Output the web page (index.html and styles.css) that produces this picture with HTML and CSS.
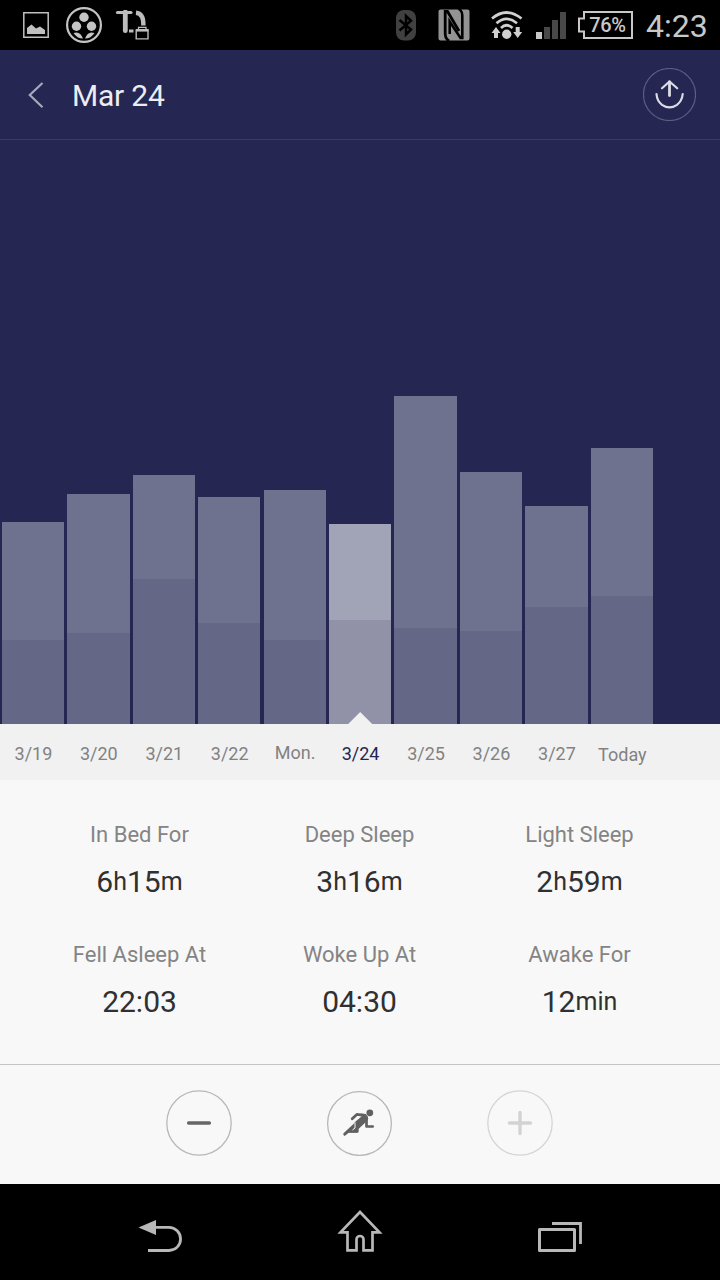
FILE: index.html
```html
<!DOCTYPE html>
<html lang="en">
<head>
<meta charset="utf-8">
<title>Sleep history</title>
<link rel="stylesheet" href="styles.css">
</head>
<body>
<div class="screen">
  <div class="status">
    <svg class="st-image" viewBox="23 12 26 26" width="26" height="26"><path d="M23.800 12.800H48.200V37.200H23.800Z" fill="none" stroke="#c0c0c0" stroke-width="1.500"/><path d="M27 34V28L31.500 24.500L36 28.500L40 26.500L45 30V34Z" fill="#c0c0c0"/></svg>
    <svg class="st-reel" viewBox="66 7 36 36" width="36" height="36"><circle cx="84" cy="25" r="16.900" fill="none" stroke="#c4c4c4" stroke-width="2.200"/><g fill="#c4c4c4"><circle cx="84" cy="17.300" r="4.700"/><circle cx="76.500" cy="26.300" r="4.700"/><circle cx="91.500" cy="26.300" r="4.700"/><path d="M73.500 33Q80 30.500 83 38.500Q77 38.500 73.500 33ZM94.500 33Q88 30.500 85 38.500Q91 38.500 94.500 33Z"/></g></svg>
    <svg class="st-lock" viewBox="115 10 35 31" width="35" height="31"><g fill="none" stroke="#bdbdbd"><path d="M117.500 12.500H131" stroke-width="3.200" stroke-linecap="round"/><path d="M125.300 12V30.700" stroke-width="4.800" stroke-linecap="round"/><path d="M136 12.800C141 13.200 143.600 17 143.400 25.500" stroke-width="4.400"/><path d="M129 31H133.500" stroke-width="3"/><path d="M136.200 30V38.900H148V30Z" stroke-width="1.400"/><path d="M136 30.300H148.500" stroke-width="2.600"/><path d="M138.500 30V27.300H146V30" stroke-width="1.300"/></g></svg>
    <svg class="st-bt" viewBox="396 10 20 31" width="20" height="31"><rect x="396" y="10" width="20" height="30.500" rx="8" fill="#404040"/><path d="M399.500 20L411 29.500L406 34.500V16L411 20.800L399.500 30.500" fill="none" stroke="#000" stroke-width="2.500"/></svg>
    <svg class="st-nfc" viewBox="438 9 32 32" width="32" height="32"><rect x="438.500" y="9.500" width="31" height="31" rx="2" fill="#939393"/><path d="M449 41Q445.200 38.500 445.200 34V11.500H447.500L459 31" fill="none" stroke="#000" stroke-width="2.800"/><path d="M458.500 8.500Q462.300 11 462.300 15.500V38H460.500L449.700 21.500V34" fill="none" stroke="#000" stroke-width="2.600"/></svg>
    <svg class="st-wifi" viewBox="490 10 33 30" width="33" height="30"><g fill="none" stroke="#d0d0d0" stroke-width="2.700"><path d="M492 18.500Q506.500 6.500 521.500 18.500M496.500 23.200Q506.500 14.500 517 23.200M501 28Q506.500 22.500 512.500 28"/></g><g fill="#d0d0d0"><circle cx="506.700" cy="34.200" r="4.700"/><path d="M496 27L500.500 33H498V38H494V33H491.500ZM517.700 38L522.200 32H519.700V27H515.700V32H513.200Z"/></g></svg>
    <svg class="st-signal" viewBox="536 12 30 27" width="30" height="27"><path d="M536 32H542V39H536Z" fill="#c8c8c8"/><path d="M544 27H550V39H544ZM552 20H558V39H552ZM560 12H566V39H560Z" fill="#484848"/></svg>
    <div class="battery">
      <svg viewBox="578 11 55 28" width="55" height="28"><path d="M584 12H632V38H584V31.500H579V18.500H584Z" fill="none" stroke="#c8c8c8" stroke-width="2"/></svg>
      <span class="battery-text">76%</span>
    </div>
    <span class="clock">4:23</span>
  </div>

  <div class="header">
    <svg class="back" viewBox="28 81 16 28" width="16" height="28"><path d="M42.500 83L29.800 95L42.500 107.200" fill="none" stroke="#a7a8ba" stroke-width="2.200"/></svg>
    <div class="title">Mar 24</div>
    <svg class="share" viewBox="643 68 53 53" width="53" height="53"><circle cx="669.500" cy="94.500" r="26" fill="none" stroke="#5c5d80" stroke-width="1.200"/><g fill="none" stroke="#dcdce4" stroke-width="2.200" stroke-linecap="round" stroke-linejoin="round"><path d="M656.500 94Q657 101 662 104.800Q669.500 110 677 104.800Q682 101 682.700 94M662 88.300L669.500 81.500L677.200 88.300"/><path d="M669.500 82V95.500" stroke-width="2.800"/></g></svg>
  </div>

  <div class="chart">
    <div class="bar" style="height:202px"><div class="deep" style="height:84px"></div></div>
    <div class="bar" style="height:230px"><div class="deep" style="height:91px"></div></div>
    <div class="bar" style="height:249px"><div class="deep" style="height:145px"></div></div>
    <div class="bar" style="height:227px"><div class="deep" style="height:101px"></div></div>
    <div class="bar" style="height:234px"><div class="deep" style="height:84px"></div></div>
    <div class="bar selected" style="height:200px"><div class="deep" style="height:104px"></div></div>
    <div class="bar" style="height:328px"><div class="deep" style="height:96px"></div></div>
    <div class="bar" style="height:252px"><div class="deep" style="height:93px"></div></div>
    <div class="bar" style="height:218px"><div class="deep" style="height:117px"></div></div>
    <div class="bar" style="height:276px"><div class="deep" style="height:128px"></div></div>
  </div>

  <div class="days">
    <span class="day">3/19</span><span class="day">3/20</span><span class="day">3/21</span><span class="day">3/22</span><span class="day high">Mon.</span><span class="day current">3/24</span><span class="day">3/25</span><span class="day">3/26</span><span class="day">3/27</span><span class="day low">Today</span>
  </div>

  <div class="stats">
    <div class="stat"><div class="label">In Bed For</div><div class="value">6<span class="unit">h</span>15<span class="unit">m</span></div></div>
    <div class="stat"><div class="label">Deep Sleep</div><div class="value">3<span class="unit">h</span>16<span class="unit">m</span></div></div>
    <div class="stat"><div class="label">Light Sleep</div><div class="value">2<span class="unit">h</span>59<span class="unit">m</span></div></div>
    <div class="stat"><div class="label">Fell Asleep At</div><div class="value">22:03</div></div>
    <div class="stat"><div class="label">Woke Up At</div><div class="value">04:30</div></div>
    <div class="stat"><div class="label">Awake For</div><div class="value">12<span class="unit">min</span></div></div>
  </div>

  <div class="actions">
    <svg viewBox="166 1090 66 66" width="66" height="66"><circle cx="199" cy="1123" r="32.200" fill="none" stroke="#b8b8b8" stroke-width="1.300"/><path d="M188.700 1123H209.300" stroke="#666" stroke-width="3.600" stroke-linecap="round"/></svg>
    <svg viewBox="326 1090 67 66" width="67" height="66"><circle cx="359.500" cy="1123.500" r="31.900" fill="none" stroke="#b8b8b8" stroke-width="1.300"/><g fill="none" stroke="#606060" stroke-width="2.700" stroke-linecap="round" stroke-linejoin="round"><path d="M352.200 1118.800L356.800 1114.400L364 1115.300M366.500 1117V1126.500H372.700M344.700 1134.300L353 1126.500M349 1131.300H357V1125"/></g><path d="M360.500 1113.500L366 1114L368.300 1118.500L367.500 1120.500L358.500 1129V1132.500H349L344.500 1135.500L343.500 1133.500L353 1124.500L355.500 1121.500L361.500 1116.500Z" fill="#606060"/><path d="M355 1122.500V1128L352.500 1130" stroke="#f8f8f8" stroke-width="1" fill="none"/><circle cx="369.800" cy="1112.800" r="3.400" fill="#606060"/></svg>
    <svg viewBox="487 1090 66 66" width="66" height="66"><circle cx="520" cy="1123" r="32.200" fill="none" stroke="#d5d5d5" stroke-width="1.300"/><path d="M509.500 1123H530.500M520 1112.500V1133.500" stroke="#d3d3d3" stroke-width="3.400" stroke-linecap="round"/></svg>
  </div>

  <div class="nav">
    <svg viewBox="138 1208 46 46" width="46" height="46"><path d="M138.500 1227.500L156 1220V1235Z" fill="#b8b8b8"/><path d="M155 1227.400H169A11.500 11.500 0 0 1 169 1250.500H148" fill="none" stroke="#b8b8b8" stroke-width="2.800"/></svg>
    <svg viewBox="337 1208 47 46" width="47" height="46"><path d="M360 1212L379.500 1232.400H372.500V1250.400H363.500V1239.500A3.500 3.500 0 0 0 356.500 1239.500V1250.400H347.500V1232.400H340.500Z" fill="none" stroke="#b8b8b8" stroke-width="2.700"/></svg>
    <svg viewBox="537 1208 46 46" width="46" height="46"><path d="M539.500 1229.500H574.500V1250.500H539.500Z" stroke-linejoin="round" fill="none" stroke="#b8b8b8" stroke-width="3"/><path d="M552 1223.500H580.500V1244" fill="none" stroke="#b8b8b8" stroke-width="2.800"/></svg>
  </div>
</div>
</body>
</html>
```
FILE: styles.css
```css
* { box-sizing: border-box; }
body { margin: 0; background: #000; font-family: Roboto, "Noto Sans", sans-serif; }
svg { display: block; flex: none; }
.screen { width: 720px; height: 1280px; overflow: hidden; display: flex; flex-direction: column; }

.status { height: 50px; flex: none; display: flex; align-items: flex-start; background: #000; }
.st-image { margin: 12px 0 0 23px; }
.st-reel { margin: 7px 0 0 17px; }
.st-lock { margin: 10px 0 0 13px; }
.st-bt { margin: 10px 0 0 246px; }
.st-nfc { margin: 9px 0 0 22px; }
.st-wifi { margin: 10px 0 0 20px; }
.st-signal { margin: 12px 0 0 13px; }
.battery { position: relative; margin: 11px 0 0 12px; }
.battery-text { position: absolute; left: 6px; top: 0; width: 47px; text-align: center; font-size: 20px; line-height: 28px; font-weight: 500; letter-spacing: -0.4px; color: #c8c8c8; }
.clock { margin-left: 13px; font-size: 32px; line-height: 52px; color: #c8c8c8; white-space: nowrap; }

.header { height: 90px; flex: none; display: flex; align-items: center; padding: 0 24px 0 28px; background: #252652; border-bottom: 1px solid #3b3c65; }
.title { flex: 1; margin-left: 28px; padding-top: 2px; font-size: 30px; letter-spacing: -0.2px; color: #ececf1; }

.chart { height: 584px; flex: none; display: flex; align-items: flex-end; gap: 3.15px; padding-left: 1.8px; background: #252652; }
.bar { width: 62.3px; flex: none; display: flex; align-items: flex-end; background: #6f728f; }
.deep { width: 100%; background: #656786; }
.selected { position: relative; background: #a1a3b6; }
.selected .deep { background: #9192a8; }
.selected::after { content: ""; position: absolute; left: 19.2px; bottom: 0; width: 24px; height: 12px; background: #f1f1f1; clip-path: polygon(50% 0, 100% 100%, 0 100%); }

.days { height: 56px; flex: none; display: flex; align-items: center; padding: 3px 0 0 0.7px; background: #f1f1f1; }
.day { width: 65.45px; flex: none; text-align: center; font-size: 18px; color: #828282; }
.high { padding-bottom: 2px; }
.low { padding-top: 2px; }
.current { color: #252652; }

.stats { height: 284px; flex: none; display: grid; grid-template-columns: repeat(3, 220px); grid-auto-rows: 120px; padding: 38px 0 0 29.5px; background: #f8f8f8; text-align: center; }
.label { font-size: 22px; line-height: 34px; color: #848484; }
.value { margin-top: 12px; font-size: 30px; line-height: 36px; color: #303030; }
.unit { position: relative; top: -2px; font-size: 25px; line-height: 1; }

.actions { height: 120px; flex: none; display: flex; gap: 94px; padding: 25px 0 0 166px; background: #f8f8f8; border-top: 1px solid #c5c5c5; }

.nav { height: 96px; flex: none; display: flex; gap: 153px; padding: 24px 0 0 138px; background: #000; }
```
